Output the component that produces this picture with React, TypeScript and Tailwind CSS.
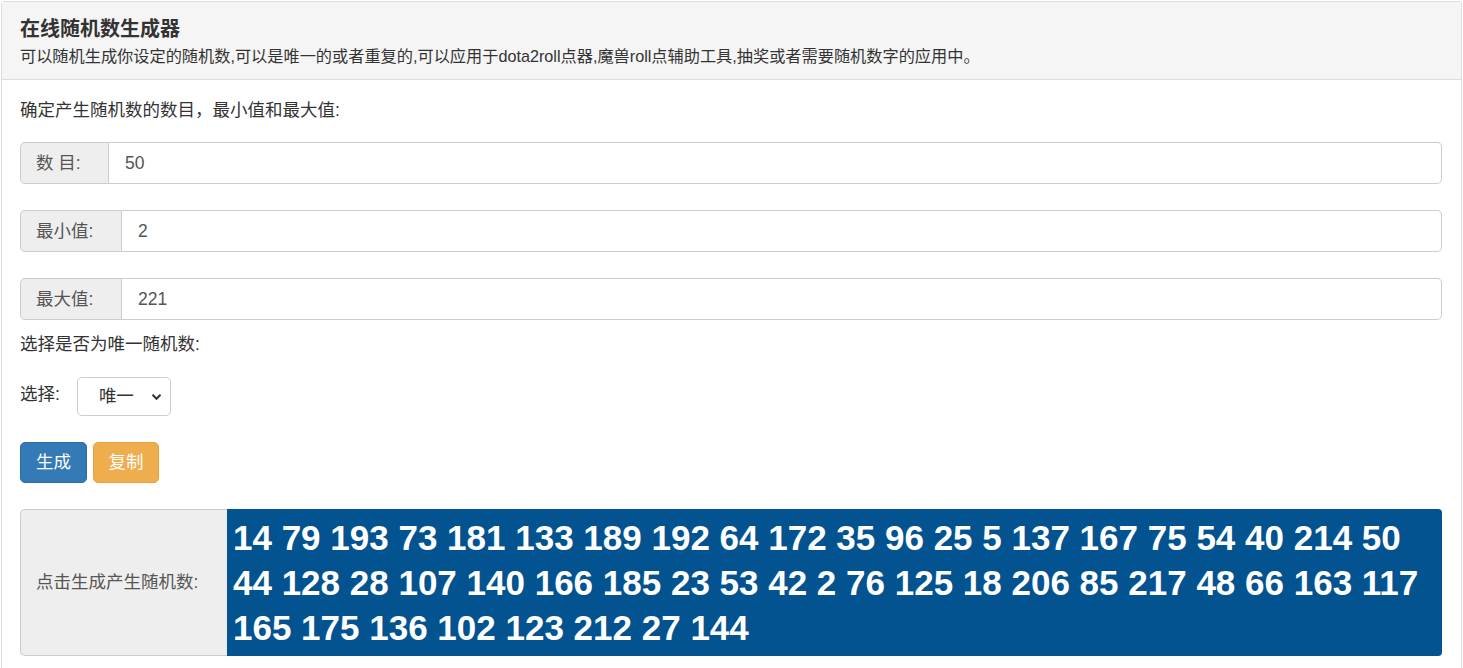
import React, { useState } from "react";

// Random number generator page: panel heading, settings form, result block
const FONT = { fontFamily: '"Liberation Sans", Arial, "Noto Sans CJK SC", sans-serif' };

const INITIAL = [
  14, 79, 193, 73, 181, 133, 189, 192, 64, 172, 35, 96, 25, 5, 137, 167, 75, 54, 40, 214, 50,
  44, 128, 28, 107, 140, 166, 185, 23, 53, 42, 2, 76, 125, 18, 206, 85, 217, 48, 66, 163, 117,
  165, 175, 136, 102, 123, 212, 27, 144,
];

function InputGroup({ label, value, labelWidth }: { label: string; value: string; labelWidth: string }) {
  return (
    <div className="flex h-[42px] w-full">
      <span
        className={`${labelWidth} flex items-center pl-[15px] bg-[#eeeeee] border border-[#cccccc] rounded-l-[5px] text-[17.5px] text-[#555555] shrink-0`}
      >
        {label}
      </span>
      <input
        defaultValue={value}
        className="flex-1 min-w-0 border border-l-0 border-[#cccccc] rounded-r-[5px] px-[16px] text-[17.5px] text-[#555555] outline-none bg-white"
      />
    </div>
  );
}

export default function App() {
  const [nums] = useState(INITIAL);

  return (
    <div className="min-h-screen bg-white p-px" style={FONT}>
      <div className="border border-[#dddddd] rounded-[3px] bg-white">
        {/* Panel heading */}
        <div className="bg-[#f5f5f5] border-b border-[#dddddd] px-[18px] pt-[15px] h-[78px]">
          <h3 className="text-[20px] font-bold text-[#333333] leading-[24px]">在线随机数生成器</h3>
          <p className="text-[16.2px] text-[#333333] leading-[22px] mt-[4px] whitespace-nowrap">
            可以随机生成你设定的随机数,可以是唯一的或者重复的,可以应用于dota2roll点器,魔兽roll点辅助工具,抽奖或者需要随机数字的应用中。
          </p>
        </div>

        {/* Panel body */}
        <div className="pl-[18px] pr-[19px] pt-[18px] pb-[20px] text-[17.5px] text-[#333333]">
          <p className="leading-[25px]">确定产生随机数的数目，最小值和最大值:</p>

          <div className="mt-[19px]">
            <InputGroup label="数 目:" value="50" labelWidth="w-[89px]" />
          </div>
          <div className="mt-[26px]">
            <InputGroup label="最小值:" value="2" labelWidth="w-[102px]" />
          </div>
          <div className="mt-[26px]">
            <InputGroup label="最大值:" value="221" labelWidth="w-[102px]" />
          </div>

          <p className="leading-[25px] mt-[12px]">选择是否为唯一随机数:</p>

          <div className="flex items-center mt-[20px] gap-[17px]">
            <span className="leading-[25px] -mt-[4px]">选择:</span>
            <div className="relative w-[94px] h-[39px]">
              <select
                defaultValue="unique"
                className="appearance-none w-full h-full border border-[#cccccc] rounded-[5px] pl-[21px] text-[17.5px] text-[#333333] bg-white outline-none"
              >
                <option value="unique">唯一</option>
                <option value="repeat">重复</option>
              </select>
              <svg
                className="absolute right-[9px] top-[16px] pointer-events-none"
                width="11"
                height="8"
                viewBox="0 0 11 8"
              >
                <path d="M1.5 1.8 L5.5 5.8 L9.5 1.8" fill="none" stroke="#333" strokeWidth="2" />
              </svg>
            </div>
          </div>

          <div className="flex gap-[6px] mt-[26px]">
            <button className="w-[67px] h-[41px] rounded-[5px] bg-[#337ab7] border border-[#2e6da4] text-white text-[17.5px]">
              生成
            </button>
            <button className="w-[66px] h-[41px] rounded-[5px] bg-[#f0ad4e] border border-[#eea236] text-white text-[17.5px]">
              复制
            </button>
          </div>

          {/* Result block */}
          <div className="flex mt-[26px] h-[147px]">
            <span className="w-[207px] shrink-0 flex items-center pl-[15px] bg-[#eeeeee] border border-[#cccccc] border-r-0 rounded-l-[5px] text-[17.5px] text-[#555555]">
              点击生成产生随机数:
            </span>
            <div className="flex-1 bg-[#02538f] rounded-r-[4px] pl-[6px] pr-[10px] pt-[6px] text-white font-bold text-[35px] leading-[45px]">
              {nums.join(" ")}
            </div>
          </div>
        </div>
      </div>
    </div>
  );
}
